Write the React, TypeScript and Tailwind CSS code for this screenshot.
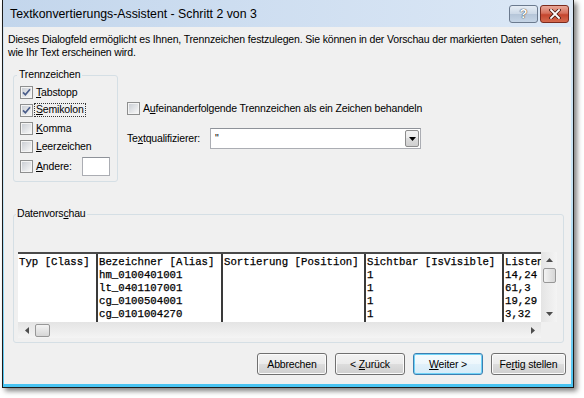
import React from "react";

const U = ({ children }: { children: React.ReactNode }) => (
  <span className="underline underline-offset-[1px]">{children}</span>
);

const CheckBox = ({ checked }: { checked?: boolean }) => (
  <span className="w-[13px] h-[13px] border border-[#8e8f8f] bg-white flex items-center justify-center shrink-0">
    <span className="w-[11px] h-[11px] border border-[#f4f4f4] bg-gradient-to-br from-[#cbcfd5] to-[#f7f7f7] flex items-center justify-center">
      {checked && (
        <svg width="9" height="9" viewBox="0 0 9 9">
          <path d="M1 4.3 L3.4 6.8 L8 1.2" stroke="#4a5d8a" strokeWidth="1.7" fill="none" />
        </svg>
      )}
    </span>
  </span>
);

const ArrowUp = () => (
  <svg width="7" height="4" viewBox="0 0 7 4">
    <polygon points="0,4 3.5,0 7,4" fill="#4d4d4d" />
  </svg>
);
const ArrowDown = () => (
  <svg width="7" height="4" viewBox="0 0 7 4">
    <polygon points="0,0 7,0 3.5,4" fill="#4d4d4d" />
  </svg>
);
const ArrowLeft = () => (
  <svg width="4" height="7" viewBox="0 0 4 7">
    <polygon points="4,0 4,7 0,3.5" fill="#4d4d4d" />
  </svg>
);
const ArrowRight = () => (
  <svg width="4" height="7" viewBox="0 0 4 7">
    <polygon points="0,0 4,3.5 0,7" fill="#4d4d4d" />
  </svg>
);

const Btn = ({ children, w, def }: { children: React.ReactNode; w: string; def?: boolean }) => (
  <div
    className={
      "h-[22px] rounded-[3px] border flex items-center justify-center " +
      w +
      (def
        ? " border-[#3c7fb1] shadow-[inset_0_0_0_1px_#6fd3f7] bg-[linear-gradient(to_bottom,#f4fbfe_0%,#edf7fc_49%,#e1f1fa_50%,#d6ecf8_100%)]"
        : " border-[#707070] shadow-[inset_0_0_0_1px_#fbfbfb] bg-[linear-gradient(to_bottom,#f2f2f2_0%,#ebebeb_49%,#dddddd_50%,#cfcfcf_100%)]")
    }
  >
    <span className="whitespace-pre">{children}</span>
  </div>
);

const rowsCol2 = ["Bezeichner [Alias]", "hm_0100401001", "lt_0401107001", "cg_0100504001", "cg_0101004270"];
const rowsCol4 = ["Sichtbar [IsVisible]", "1", "1", "1", "1"];
const rowsCol5 = ["Listenpreis [Preis]", "14,24", "61,3", "19,29", "3,32"];

const Col = ({ w, lines, last }: { w: string; lines: string[]; last?: boolean }) => (
  <div className={w + " shrink-0 overflow-hidden whitespace-pre pl-[1px] pt-[2px] " + (last ? "" : "border-r-2 border-[#3a3a3a]")}>
    {lines.map((l, i) => (
      <div key={i} className="h-[13px]">
        {l}
      </div>
    ))}
  </div>
);

export default function App() {
  return (
    <div className="w-[584px] h-[398px] bg-white text-black font-['Liberation_Sans',Arial,sans-serif] overflow-hidden">
      <div className="ml-[2px] w-[572px] h-[388px] flex flex-col border-x border-b border-[#1c1c1c] bg-gradient-to-b from-[#d4e4f4] via-[#c6e4f5] to-[#48c4f2] shadow-[3px_3px_5px_rgba(0,0,0,0.5)]">
        {/* title bar */}
        <div className="h-[27px] shrink-0 flex items-center pl-[7px] pr-[4px] bg-gradient-to-r from-[#c3d6ec] to-[#dce8f6]">
          <span className="flex-1 text-[12.3px] leading-[14px]">Textkonvertierungs-Assistent - Schritt 2 von 3</span>
          <div className="flex gap-[2px]">
            <div className="w-[29px] h-[18px] rounded-[3px] border border-[#6b7a8e] bg-[linear-gradient(to_bottom,#e6edf5_0%,#ccd8e6_50%,#b5c5d8_51%,#c6d5e6_100%)] flex items-center justify-center">
              <span className="text-[13px] font-bold leading-none text-white [text-shadow:0_0_1px_#333,0_0_1px_#333]">?</span>
            </div>
            <div className="w-[29px] h-[18px] rounded-[3px] border border-[#7a2a1e] bg-[linear-gradient(to_bottom,#e9a99b_0%,#d6705c_45%,#c4452e_55%,#d56a4e_100%)] flex items-center justify-center">
              <svg width="12" height="10" viewBox="0 0 12 10">
                <path d="M2 1 L10 9 M10 1 L2 9" stroke="#4a1a12" strokeWidth="3.4" strokeLinecap="square" />
                <path d="M2 1 L10 9 M10 1 L2 9" stroke="#ffffff" strokeWidth="1.8" strokeLinecap="square" />
              </svg>
            </div>
          </div>
        </div>

        {/* client area */}
        <div className="flex-1 ml-[1px] mr-[2px] mb-[3px] bg-[#f0f0f0] flex flex-col text-[10.5px] tracking-[-0.16px] leading-[13px]">
          <p className="pt-[6px] pl-[4px] whitespace-nowrap">
            Dieses Dialogfeld ermöglicht es Ihnen, Trennzeichen festzulegen. Sie können in der Vorschau der markierten Daten sehen,
            <br />
            wie Ihr Text erscheinen wird.
          </p>

          <div className="flex mt-[8px] ml-[9px]">
            <fieldset className="w-[105px] border border-[#d5dfe5] rounded-[3px] pl-[6px] pb-[5px]">
              <legend className="-ml-[3px] px-[2px] h-[16px] leading-[14px]">Trennzeichen</legend>
              <div className="h-[18px] flex items-center gap-[2px]">
                <CheckBox checked />
                <span className="px-[1px]">
                  <U>T</U>abstopp
                </span>
              </div>
              <div className="h-[18px] flex items-center gap-[1px]">
                <CheckBox checked />
                <span className="px-[1px] border border-dotted border-[#333] leading-[11px] pb-[1px]">
                  <U>S</U>emikolon
                </span>
              </div>
              <div className="h-[18px] flex items-center gap-[2px]">
                <CheckBox />
                <span className="px-[1px]">
                  <U>K</U>omma
                </span>
              </div>
              <div className="h-[18px] flex items-center gap-[2px]">
                <CheckBox />
                <span className="px-[1px]">
                  <U>L</U>eerzeichen
                </span>
              </div>
              <div className="h-[20px] mt-[1px] flex items-center gap-[2px]">
                <CheckBox />
                <span className="px-[1px] w-[45px]">
                  <U>A</U>ndere:
                </span>
                <span className="w-[28px] h-[19px] bg-white border border-[#abadb3] border-t-[#8e9299]" />
              </div>
            </fieldset>

            <div className="ml-[9px] pt-[34px] flex flex-col">
              <div className="h-[14px] flex items-center gap-[2px]">
                <CheckBox />
                <span className="px-[1px]">
                  A<U>u</U>feinanderfolgende Trennzeichen als ein Zeichen behandeln
                </span>
              </div>
              <div className="mt-[13px] flex items-center">
                <span className="w-[83px]">
                  Te<U>x</U>tqualifizierer:
                </span>
                <div className="w-[211px] h-[21px] bg-white border border-[#abadb3] border-t-[#8e9299] flex items-center">
                  <span className="flex-1 pl-[4px]">"</span>
                  <div className="w-[14px] h-[17px] mr-[1px] rounded-[2px] border border-[#8c8c8c] bg-[linear-gradient(to_bottom,#f2f2f2_0%,#ebebeb_49%,#dddddd_50%,#cfcfcf_100%)] flex items-center justify-center">
                    <svg width="7" height="4" viewBox="0 0 7 4">
                      <polygon points="0,0 7,0 3.5,4" fill="#000" />
                    </svg>
                  </div>
                </div>
              </div>
            </div>
          </div>

          <fieldset className="mt-[24px] ml-[9px] w-[551px] border border-[#d5dfe5] rounded-[3px] pl-[4px] pr-[5px] pt-[30px] pb-[4px]">
            <legend className="-ml-[2px] px-[1px] h-[16px] leading-[14px]">
              Datenvors<U>c</U>hau
            </legend>
            <div className="w-[539px] flex flex-col tracking-normal">
              <div className="flex h-[70px]">
                <div className="w-[523px] bg-white border-t-2 border-[#4a4a4a] flex overflow-hidden font-['Liberation_Mono','Courier_New',monospace] text-[10.7px] leading-[13px] [-webkit-text-stroke:0.25px_#000]">
                  <Col w="w-[80px]" lines={["Typ [Class]", "", "", "", ""]} />
                  <Col w="w-[125px]" lines={rowsCol2} />
                  <Col w="w-[143px]" lines={["Sortierung [Position]", "", "", "", ""]} />
                  <Col w="w-[138px]" lines={rowsCol4} />
                  <Col w="w-[37px]" lines={rowsCol5} last />
                </div>
                <div className="w-[16px] h-[70px] bg-gradient-to-r from-[#e4e4e4] to-[#f4f4f4] flex flex-col items-center">
                  <div className="h-[16px] w-full flex items-center justify-center">
                    <ArrowUp />
                  </div>
                  <div className="w-[13px] h-[15px] rounded-[2px] border border-[#979797] bg-gradient-to-r from-[#f3f3f3] to-[#d6d6d6]" />
                  <div className="flex-1" />
                  <div className="h-[16px] w-full flex items-center justify-center">
                    <ArrowDown />
                  </div>
                </div>
              </div>
              <div className="flex h-[16px]">
                <div className="w-[523px] h-[16px] bg-gradient-to-b from-[#e4e4e4] to-[#f4f4f4] flex items-center">
                  <div className="w-[17px] h-full flex items-center justify-center">
                    <ArrowLeft />
                  </div>
                  <div className="w-[15px] h-[13px] rounded-[2px] border border-[#979797] bg-gradient-to-b from-[#f3f3f3] to-[#d6d6d6]" />
                  <div className="flex-1" />
                  <div className="w-[17px] h-full flex items-center justify-center">
                    <ArrowRight />
                  </div>
                </div>
                <div className="w-[16px] h-[16px] bg-[#f0f0f0]" />
              </div>
            </div>
          </fieldset>

          <div className="mt-[10px] flex justify-end gap-[8px] pr-[5px]">
            <Btn w="w-[70px]">Abbrechen</Btn>
            <Btn w="w-[70px]">
              &lt; <U>Z</U>urück
            </Btn>
            <Btn w="w-[70px]" def>
              <U>W</U>eiter &gt;
            </Btn>
            <Btn w="w-[75px]">
              Fe<U>r</U>tig stellen
            </Btn>
          </div>
        </div>
      </div>
    </div>
  );
}
